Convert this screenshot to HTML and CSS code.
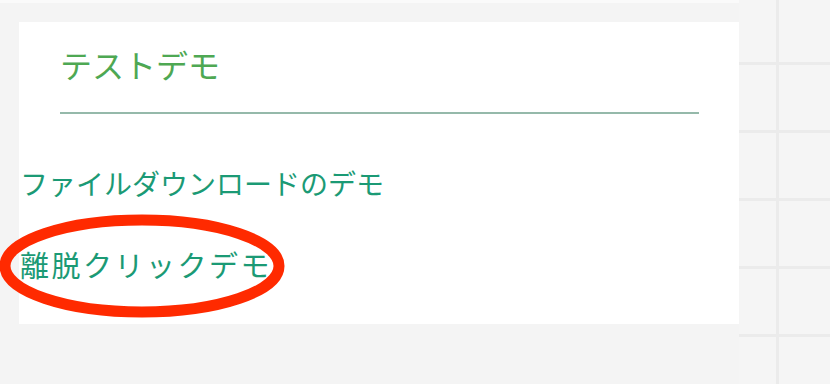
FILE: index.html
```html
<!DOCTYPE html>
<html lang="ja">
<head>
  <meta charset="UTF-8" />
  <meta name="viewport" content="width=device-width, initial-scale=1" />
  <title>テストデモ</title>
  <link rel="stylesheet" href="styles.css">
</head>
<body>
  <div class="top-strip"></div>
  <div class="page">
    <div class="card">
      <div class="card-head">
        <h2>テストデモ</h2>
      </div>
      <ul class="demo-list">
        <li><a href="#">ファイルダウンロードのデモ</a></li>
        <li class="marked">
          <a href="#">離脱クリックデモ</a>
          <!-- annotation circle -->
          <svg class="circle" width="300" height="112" viewBox="0 0 300 112" aria-hidden="true">
            <ellipse cx="142" cy="55" rx="137" ry="46" fill="none" stroke="#ff2a00" stroke-width="11" />
          </svg>
        </li>
      </ul>
    </div>
    <div class="side"></div>
  </div>
</body>
</html>
```

FILE: styles.css
```css
body {
  margin: 0;
  background: #f4f4f4;
  font-family: "Noto Sans CJK JP", "Noto Sans", sans-serif;
  overflow: hidden;
}
.top-strip {
  height: 3px;
  background: #fafafa;
}
.page {
  display: flex;
  align-items: flex-start;
  height: 381px;
}
.card {
  background: #fff;
  margin: 19px 0 0 19px;
  width: 720px;
  height: 302px;
  box-sizing: border-box;
  padding-top: 20px;
}
.card-head {
  margin: 0 40px 0 41px;
  border-bottom: 2px solid #95b9aa;
  padding-bottom: 26px;
}
h2 {
  margin: 0;
  font-size: 32px;
  font-weight: 400;
  line-height: 44px;
  color: #4ea853;
}
.demo-list {
  list-style: none;
  margin: 0;
  padding: 49px 0 0 1px;
}
.demo-list li {
  line-height: 40px;
  margin-bottom: 40px;
  position: relative;
}
.demo-list a {
  font-size: 28px;
  color: #1b9a75;
  text-decoration: none;
}
.demo-list .marked {
  margin-top: -4px;
}
.marked a {
  font-size: 29px;
  letter-spacing: 2.5px;
}
.circle {
  position: absolute;
  left: -20px;
  top: -33px;
}
.side {
  flex: 1;
  align-self: stretch;
  margin-top: -3px;
  background-color: #f5f5f5;
  background-image:
    linear-gradient(90deg, transparent 37px, #ebebeb 37px, #ebebeb 40px, transparent 40px),
    repeating-linear-gradient(180deg, transparent 0, transparent 62px, #ebebeb 62px, #ebebeb 65px, transparent 65px, transparent 68px);
}
```
